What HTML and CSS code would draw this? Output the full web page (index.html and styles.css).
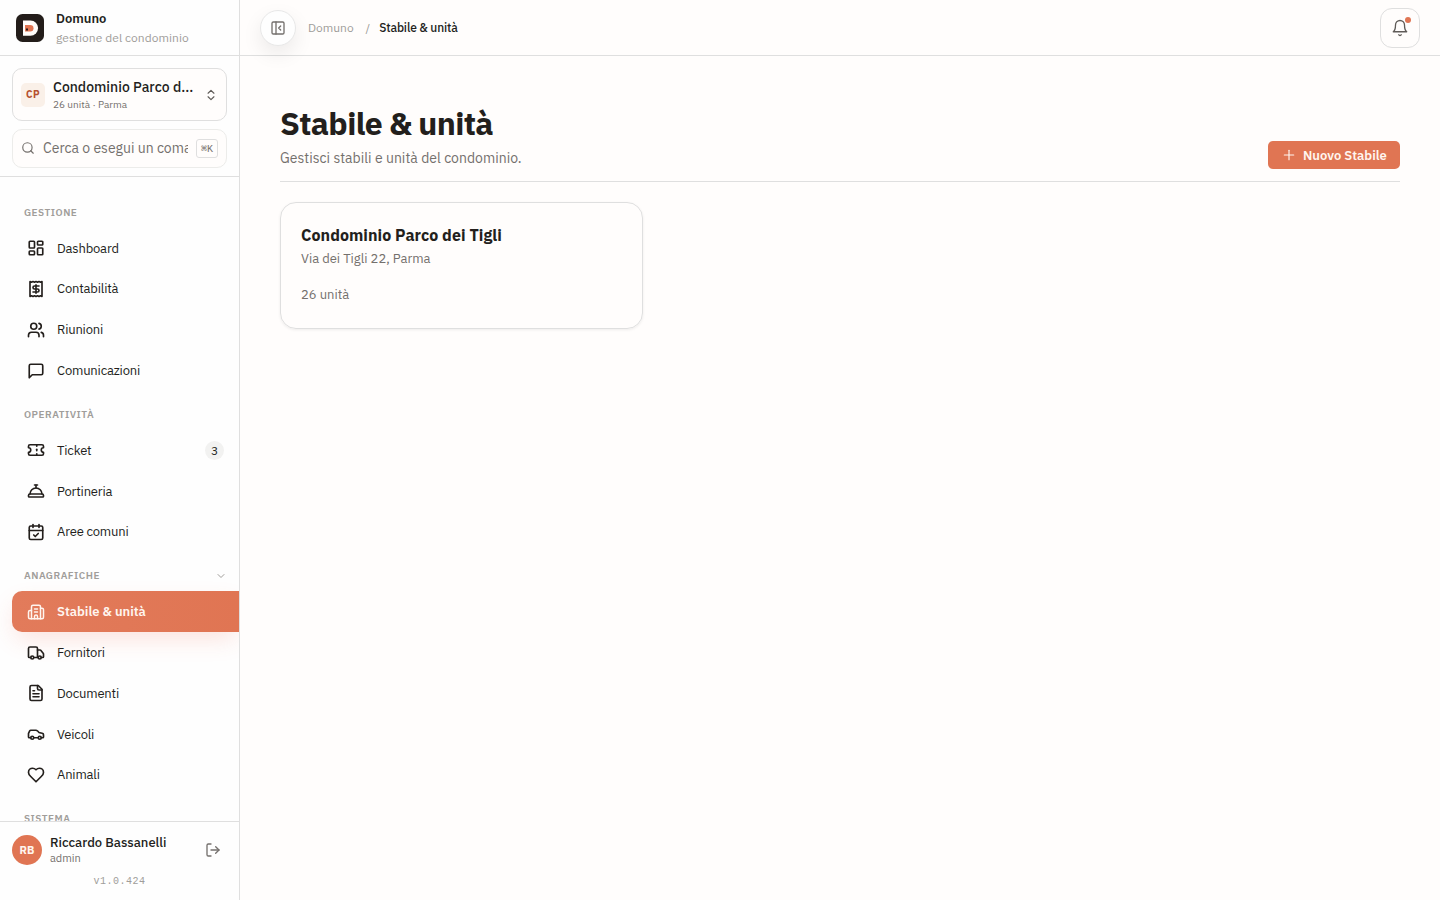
FILE: index.html
```
<!DOCTYPE html>
<html lang="it">
<head>
  <meta charset="UTF-8">
  <meta name="viewport" content="width=device-width, initial-scale=1.0">
  <title>Domuno - Stabile &amp; unità</title>
  <link rel="stylesheet" href="styles.css">
</head>
<body>
  <div class="app">

    <!-- Sidebar -->
    <aside class="sidebar">
      <div class="brand">
        <svg class="brand-logo" viewBox="0 0 28 28">
          <rect width="28" height="28" rx="6.5" fill="#231d1a"/>
          <path d="M7 6.500h7.500a7.600 7.600 0 0 1 0 15.200H7z" fill="#fffdfa"/>
          <path d="M9 11h5.200a3.300 3.300 0 0 1 0 6.600H9z" fill="#e07553"/>
          <rect x="10" y="14.500" width="2" height="2" fill="#231d1a"/>
        </svg>
        <div class="brand-text">
          <div class="brand-name">Domuno</div>
          <div class="brand-tagline">gestione del condominio</div>
        </div>
      </div>

      <div class="sidebar-tools">
        <button class="switcher">
          <span class="switcher-badge">CP</span>
          <span class="switcher-text">
            <span class="switcher-name">Condominio Parco d...</span>
            <span class="switcher-meta">26 unità · Parma</span>
          </span>
          <svg class="icon icon-sm" viewBox="0 0 24 24"><path d="m7 15 5 5 5-5"/><path d="m7 9 5-5 5 5"/></svg>
        </button>
        <div class="search">
          <svg class="icon icon-sm" viewBox="0 0 24 24"><circle cx="11" cy="11" r="8"/><path d="m21 21-4.300-4.300"/></svg>
          <input class="search-input" type="text" placeholder="Cerca o esegui un comando">
          <kbd>⌘K</kbd>
        </div>
      </div>

      <nav class="nav">
        <div class="nav-group">
          <div class="nav-label"><span>GESTIONE</span></div>
          <a class="nav-item"><svg class="icon" viewBox="0 0 24 24"><rect x="3" y="3" width="7" height="9" rx="1"/><rect x="14" y="3" width="7" height="5" rx="1"/><rect x="14" y="12" width="7" height="9" rx="1"/><rect x="3" y="16" width="7" height="5" rx="1"/></svg><span>Dashboard</span></a>
          <a class="nav-item"><svg class="icon" viewBox="0 0 24 24"><path d="M4 2v20l2-1 2 1 2-1 2 1 2-1 2 1 2-1 2 1V2l-2 1-2-1-2 1-2-1-2 1-2-1-2 1Z"/><path d="M16 8h-6a2 2 0 1 0 0 4h4a2 2 0 1 1 0 4H8"/><path d="M12 17.500v-11"/></svg><span>Contabilità</span></a>
          <a class="nav-item"><svg class="icon" viewBox="0 0 24 24"><path d="M16 21v-2a4 4 0 0 0-4-4H6a4 4 0 0 0-4 4v2"/><circle cx="9" cy="7" r="4"/><path d="M22 21v-2a4 4 0 0 0-3-3.870"/><path d="M16 3.130a4 4 0 0 1 0 7.750"/></svg><span>Riunioni</span></a>
          <a class="nav-item"><svg class="icon" viewBox="0 0 24 24"><path d="M21 15a2 2 0 0 1-2 2H7l-4 4V5a2 2 0 0 1 2-2h14a2 2 0 0 1 2 2z"/></svg><span>Comunicazioni</span></a>
        </div>

        <div class="nav-group">
          <div class="nav-label"><span>OPERATIVITÀ</span></div>
          <a class="nav-item"><svg class="icon" viewBox="0 0 24 24"><path d="M2 9a3 3 0 0 1 0 6v2a2 2 0 0 0 2 2h16a2 2 0 0 0 2-2v-2a3 3 0 0 1 0-6V7a2 2 0 0 0-2-2H4a2 2 0 0 0-2 2Z"/><path d="M13 5v2"/><path d="M13 17v2"/><path d="M13 11v2"/></svg><span>Ticket</span><span class="nav-count">3</span></a>
          <a class="nav-item"><svg class="icon" viewBox="0 0 24 24"><path d="M3 20a1 1 0 0 1-1-1v-1a2 2 0 0 1 2-2h16a2 2 0 0 1 2 2v1a1 1 0 0 1-1 1Z"/><path d="M20 16a8 8 0 1 0-16 0"/><path d="M12 4v4"/><path d="M10 4h4"/></svg><span>Portineria</span></a>
          <a class="nav-item"><svg class="icon" viewBox="0 0 24 24"><path d="M8 2v4"/><path d="M16 2v4"/><rect x="3" y="4" width="18" height="18" rx="2"/><path d="M3 10h18"/><path d="m9 16 2 2 4-4"/></svg><span>Aree comuni</span></a>
        </div>

        <div class="nav-group">
          <div class="nav-label"><span>ANAGRAFICHE</span><svg class="icon icon-xs" viewBox="0 0 24 24"><path d="m6 9 6 6 6-6"/></svg></div>
          <a class="nav-item active"><svg class="icon" viewBox="0 0 24 24"><path d="M10 12h4"/><path d="M10 8h4"/><path d="M14 21v-3a2 2 0 0 0-4 0v3"/><path d="M6 10H4a2 2 0 0 0-2 2v7a2 2 0 0 0 2 2h16a2 2 0 0 0 2-2V9a2 2 0 0 0-2-2h-2"/><path d="M6 21V5a2 2 0 0 1 2-2h8a2 2 0 0 1 2 2v16"/></svg><span>Stabile &amp; unità</span></a>
          <a class="nav-item"><svg class="icon" viewBox="0 0 24 24"><path d="M14 18V6a2 2 0 0 0-2-2H4a2 2 0 0 0-2 2v11a1 1 0 0 0 1 1h2"/><path d="M15 18H9"/><path d="M19 18h2a1 1 0 0 0 1-1v-3.650a1 1 0 0 0-.22-.624l-3.480-4.350A1 1 0 0 0 17.520 8H14"/><circle cx="17" cy="18" r="2"/><circle cx="7" cy="18" r="2"/></svg><span>Fornitori</span></a>
          <a class="nav-item"><svg class="icon" viewBox="0 0 24 24"><path d="M15 2H6a2 2 0 0 0-2 2v16a2 2 0 0 0 2 2h12a2 2 0 0 0 2-2V7Z"/><path d="M14 2v4a2 2 0 0 0 2 2h4"/><path d="M10 9H8"/><path d="M16 13H8"/><path d="M16 17H8"/></svg><span>Documenti</span></a>
          <a class="nav-item"><svg class="icon" viewBox="0 0 24 24"><path d="M19 17h2c.6 0 1-.4 1-1v-3c0-.9-.7-1.700-1.500-1.900C18.700 10.600 16 10 16 10s-1.300-1.400-2.200-2.300c-.5-.4-1.100-.7-1.800-.7H5c-.6 0-1.100.4-1.400.9l-1.400 2.900A3.700 3.700 0 0 0 2 12v4c0 .6.4 1 1 1h2"/><circle cx="7" cy="17" r="2"/><path d="M9 17h6"/><circle cx="17" cy="17" r="2"/></svg><span>Veicoli</span></a>
          <a class="nav-item"><svg class="icon" viewBox="0 0 24 24"><path d="M19 14c1.490-1.460 3-3.210 3-5.500A5.500 5.500 0 0 0 16.500 3c-1.760 0-3 .5-4.500 2-1.500-1.500-2.740-2-4.500-2A5.500 5.500 0 0 0 2 8.500c0 2.300 1.500 4.050 3 5.500l7 7Z"/></svg><span>Animali</span></a>
        </div>

        <div class="nav-group">
          <div class="nav-label"><span>SISTEMA</span></div>
        </div>
      </nav>

      <div class="sidebar-footer">
        <div class="user">
          <div class="avatar">RB</div>
          <div class="user-text">
            <div class="user-name">Riccardo Bassanelli</div>
            <div class="user-role">admin</div>
          </div>
          <svg class="icon icon-md" viewBox="0 0 24 24"><path d="M9 21H5a2 2 0 0 1-2-2V5a2 2 0 0 1 2-2h4"/><path d="m16 17 5-5-5-5"/><path d="M21 12H9"/></svg>
        </div>
        <div class="version">v1.0.424</div>
      </div>
    </aside>

    <!-- Main area -->
    <div class="content">
      <header class="topbar">
        <button class="toggle"><svg class="icon icon-md" viewBox="0 0 24 24"><rect x="3" y="3" width="18" height="18" rx="2"/><path d="M9 3v18"/><path d="m16 15-3-3 3-3"/></svg></button>
        <div class="breadcrumb">
          <span class="crumb">Domuno</span>
          <span class="crumb-sep">/</span>
          <span class="crumb-current">Stabile &amp; unità</span>
        </div>
        <button class="bell">
          <svg class="icon" viewBox="0 0 24 24"><path d="M6 8a6 6 0 0 1 12 0c0 7 3 9 3 9H3s3-2 3-9"/><path d="M10.300 21a1.940 1.940 0 0 0 3.400 0"/></svg>
          <span class="bell-dot"></span>
        </button>
      </header>

      <main class="page">
        <div class="page-header">
          <div>
            <h1>Stabile &amp; unità</h1>
            <p class="subtitle">Gestisci stabili e unità del condominio.</p>
          </div>
          <button class="btn-primary"><svg class="icon icon-sm" viewBox="0 0 24 24"><path d="M4 12h16"/><path d="M12 4v16"/></svg><span>Nuovo Stabile</span></button>
        </div>

        <div class="cards">
          <div class="card">
            <h2>Condominio Parco dei Tigli</h2>
            <p class="card-address">Via dei Tigli 22, Parma</p>
            <p class="card-units">26 unità</p>
          </div>
        </div>
      </main>
    </div>
  </div>
</body>
</html>
```
FILE: styles.css
```
* {
  box-sizing: border-box;
}
body {
  margin: 0;
  font-family: "IBM Plex Sans", Roboto, sans-serif;
  background-color: #fffdfc;
  color: #231f1c;
}
button {
  font-family: inherit;
  padding: 0;
}
h1, h2, p {
  margin: 0;
}
.app {
  display: flex;
  height: 100vh;
  overflow: hidden;
}
.icon {
  width: 18px;
  height: 18px;
  flex-shrink: 0;
  fill: none;
  stroke: currentColor;
  stroke-width: 2;
  stroke-linecap: round;
  stroke-linejoin: round;
}
.icon-md {
  width: 16px;
  height: 16px;
}
.icon-sm {
  width: 14px;
  height: 14px;
}
.icon-xs {
  width: 12px;
  height: 12px;
}

/* Sidebar */
.sidebar {
  width: 240px;
  flex-shrink: 0;
  display: flex;
  flex-direction: column;
  background-color: #fefefe;
  border-right: 1px solid #dfdfdf;
}
.brand {
  display: flex;
  align-items: center;
  gap: 12px;
  height: 56px;
  flex-shrink: 0;
  padding: 0 16px;
  border-bottom: 1px solid #dfdfdf;
}
.brand-logo {
  width: 28px;
  height: 28px;
}
.brand-name {
  font-size: 13px;
  font-weight: 600;
  line-height: 18px;
  margin-top: 1px;
}
.brand-tagline {
  font-size: 12px;
  line-height: 18px;
  margin-top: 1px;
  color: #a09d9a;
  letter-spacing: 0.05px;
}
.sidebar-tools {
  height: 121px;
  flex-shrink: 0;
  padding: 12px 12px 8px;
  border-bottom: 1px solid #dfdfdf;
}
.switcher {
  display: flex;
  align-items: center;
  gap: 8px;
  width: 100%;
  height: 53px;
  padding: 0 8px;
  background-color: #fffdfc;
  border: 1px solid #dfdfdf;
  border-radius: 10px;
  text-align: left;
  color: #5f5b58;
}
.switcher-badge {
  width: 24px;
  height: 24px;
  line-height: 24px;
  border-radius: 5px;
  background-color: #faf0e8;
  color: #b5502f;
  font-size: 10px;
  font-weight: 700;
  text-align: center;
  letter-spacing: 0.4px;
}
.switcher-text {
  flex: 1;
  white-space: nowrap;
}
.switcher-name {
  display: block;
  font-size: 14px;
  font-weight: 500;
  line-height: 19px;
  color: #231f1c;
}
.switcher-meta {
  display: block;
  font-size: 10px;
  line-height: 15px;
  color: #74706d;
}
.search {
  display: flex;
  align-items: center;
  gap: 8px;
  height: 39px;
  margin-top: 8px;
  padding: 0 8px;
  background-color: #fffdfc;
  border: 1px solid #ececea;
  border-radius: 10px;
  color: #74706d;
}
.search .icon {
  margin-bottom: 1px;
}
.search-input {
  flex: 1;
  min-width: 0;
  height: 20px;
  padding: 0;
  margin-bottom: 1px;
  border: none;
  background: transparent;
  font-family: inherit;
  font-size: 14px;
}
.search-input::placeholder {
  color: #74706d;
}
.search kbd {
  width: 22px;
  height: 19px;
  line-height: 19px;
  border: 1px solid #dfdfdf;
  border-radius: 3px;
  font-family: "Liberation Mono", "DejaVu Sans Mono", monospace;
  font-size: 10px;
  text-align: center;
}
.nav {
  flex: 1;
  overflow: hidden;
  padding: 20px 0 0 12px;
}
.nav-group {
  margin-bottom: 8.200px;
}
.nav-label {
  display: flex;
  align-items: center;
  justify-content: space-between;
  height: 30.800px;
  padding: 0 12px;
  font-size: 10px;
  font-weight: 600;
  letter-spacing: 0.5px;
  color: #a09d9a;
}
.nav-item {
  display: flex;
  align-items: center;
  gap: 12px;
  height: 40.800px;
  padding: 0 15px;
  font-size: 13px;
  letter-spacing: -0.18px;
  color: #231f1c;
}
.nav-item .icon {
  stroke-width: 2.200;
}
.nav-item.active {
  background: linear-gradient(90deg, #e27b5b, #e07553);
  border-radius: 10px 0 0 10px;
  box-shadow: 0 10px 24px -4px rgba(240, 90, 60, 0.18);
  color: #fff5ef;
  font-weight: 600;
  letter-spacing: 0;
}
.nav-item.active .icon {
  stroke-width: 2;
}
.nav-count {
  width: 19px;
  height: 19px;
  line-height: 19px;
  margin-left: auto;
  border-radius: 50%;
  background-color: #f2f2f1;
  font-size: 12px;
  text-align: center;
}
.sidebar-footer {
  height: 79px;
  flex-shrink: 0;
  padding: 12px;
  border-top: 1px solid #dfdfdf;
  background-color: #fefefe;
}
.user {
  display: flex;
  align-items: center;
  gap: 8px;
  height: 32px;
  padding-right: 6px;
  color: #74706d;
}
.avatar {
  width: 30px;
  height: 30px;
  line-height: 30px;
  border-radius: 50%;
  background-color: #e07553;
  color: #fff5ef;
  font-size: 11px;
  font-weight: 700;
  letter-spacing: 0.2px;
  text-align: center;
}
.user-text {
  flex: 1;
}
.user-name {
  font-size: 13px;
  font-weight: 500;
  line-height: 17px;
  color: #231f1c;
}
.user-role {
  font-size: 11px;
  line-height: 15px;
}
.version {
  margin-top: 8px;
  font-family: "Liberation Mono", monospace;
  font-size: 10px;
  line-height: 15px;
  letter-spacing: 0.5px;
  text-align: center;
  color: #a09d9a;
}

/* Topbar */
.content {
  flex: 1;
  min-width: 0;
}
.topbar {
  display: flex;
  align-items: center;
  height: 56px;
  padding: 0 20px;
  border-bottom: 1px solid #dfdfdf;
}
.toggle {
  display: flex;
  align-items: center;
  justify-content: center;
  width: 36px;
  height: 36px;
  border: 1px solid #e8e8e8;
  border-radius: 50%;
  background-color: #fefefe;
  box-shadow: 0 8px 20px rgba(0, 0, 0, 0.08);
  color: #74706d;
}
.breadcrumb {
  display: flex;
  margin-left: 12px;
  font-size: 12px;
  line-height: 18px;
  color: #a09d9a;
}
.crumb-sep {
  margin: 0 9px 0 12px;
}
.crumb-current {
  color: #231f1c;
  font-weight: 500;
  letter-spacing: -0.15px;
}
.bell {
  position: relative;
  display: flex;
  align-items: center;
  justify-content: center;
  width: 40px;
  height: 40px;
  margin-left: auto;
  border: 1px solid #dfdfdf;
  border-radius: 12px;
  background-color: #fffdfc;
  color: #5f5b58;
}
.bell .icon {
  stroke-width: 1.750;
}
.bell-dot {
  position: absolute;
  top: 8px;
  right: 8px;
  width: 6px;
  height: 6px;
  border-radius: 50%;
  background-color: #e07553;
}

/* Page */
.page {
  padding: 48px 40px;
}
.page-header {
  display: flex;
  align-items: flex-end;
  justify-content: space-between;
  height: 78px;
  padding-bottom: 12px;
  border-bottom: 1px solid #dfdfdf;
}
.page-header h1 {
  font-size: 32px;
  font-weight: 700;
  line-height: 38px;
  letter-spacing: -0.64px;
}
.subtitle {
  margin-top: 6px;
  font-size: 14px;
  line-height: 21px;
  letter-spacing: 0.02px;
  color: #74706d;
}
.btn-primary {
  display: flex;
  align-items: center;
  gap: 7px;
  height: 28px;
  width: 132px;
  padding: 0 14px;
  border: none;
  border-radius: 5px;
  background-color: #e07553;
  color: #fff5ef;
  font-size: 13px;
  font-weight: 600;
  white-space: nowrap;
}
.cards {
  display: grid;
  grid-template-columns: repeat(3, 1fr);
  gap: 16px;
  margin-top: 20px;
}
.card {
  height: 127px;
  padding: 20px;
  border: 1px solid #dfdfdf;
  border-radius: 16px;
  box-shadow: 0 1px 3px rgba(0, 0, 0, 0.07);
}
.card h2 {
  font-size: 16px;
  font-weight: 700;
  line-height: 24px;
  letter-spacing: 0.05px;
}
.card p {
  font-size: 13px;
  line-height: 20px;
  color: #74706d;
}
.card .card-address {
  margin-top: 2px;
}
.card .card-units {
  margin-top: 16px;
}
```
